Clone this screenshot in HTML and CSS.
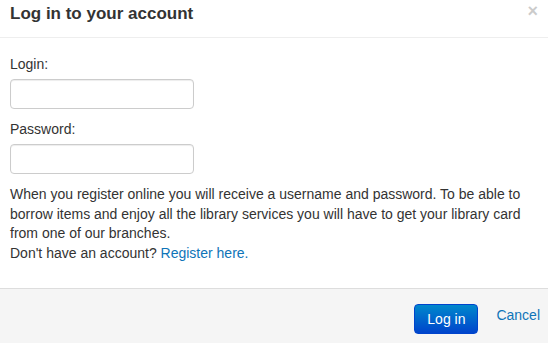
FILE: index.html
```html
<!DOCTYPE html>
<html>
<head>
<meta charset="utf-8">
<link rel="stylesheet" href="styles.css">
</head>
<body>
<div class="modal">
  <div class="modal-header">
    <h3 class="title">Log in to your account</h3>
    <span class="close">&times;</span>
  </div>
  <div class="modal-body">
    <label class="label">Login:</label>
    <input class="field" type="text">
    <label class="label">Password:</label>
    <input class="field" type="password">
    <p class="info">When you register online you will receive a username and password. To be able to borrow items and enjoy all the library services you will have to get your library card from one of our branches.<br>Don't have an account? <a class="link" href="#">Register here.</a></p>
  </div>
  <div class="modal-footer">
    <button class="btn-primary">Log in</button>
    <a class="cancel" href="#">Cancel</a>
  </div>
</div>
</body>
</html>
```
FILE: styles.css
```css
html, body {
  margin: 0;
  padding: 0;
  background: #fff;
}
body {
  font-family: "Liberation Sans", Arial, sans-serif;
  font-size: 14px;
  line-height: 20px;
  color: #333;
  width: 548px;
  height: 343px;
  overflow: hidden;
}
.modal {
  display: flex;
  flex-direction: column;
  height: 343px;
}
.modal-header {
  height: 37px;
  border-bottom: 1px solid #eee;
  display: flex;
  justify-content: space-between;
  align-items: flex-start;
  padding: 0 10px;
}
.title {
  margin: 0;
  font-size: 17px;
  font-weight: bold;
  line-height: 20px;
  padding-top: 4px;
  color: #333;
}
.close {
  font-size: 18px;
  font-weight: bold;
  line-height: 20px;
  color: #000;
  opacity: 0.2;
  margin-top: 1px;
}
.modal-body {
  flex: 1;
  padding: 16px 10px 0;
  display: flex;
  flex-direction: column;
  align-items: flex-start;
}
.label {
  display: block;
  margin-bottom: 5px;
}
.field {
  box-sizing: border-box;
  width: 184px;
  height: 30px;
  border: 1px solid #ccc;
  border-radius: 4px;
  padding: 4px 6px;
  margin: 0 0 10px;
  font: inherit;
  box-shadow: inset 0 1px 1px rgba(0,0,0,0.075);
}
.info {
  margin: 1px 0 0;
  line-height: 19.5px;
}
.link, .cancel {
  color: #0f74b8;
  text-decoration: none;
}
.modal-footer {
  height: 54px;
  border-top: 1px solid #ddd;
  background: #f5f5f5;
  display: flex;
  justify-content: flex-end;
  align-items: center;
  padding: 0 8px 0 0;
  gap: 18px;
}
.btn-primary {
  box-sizing: border-box;
  width: 64px;
  height: 30px;
  border: 1px solid #04c;
  border-radius: 4px;
  background: linear-gradient(#0088cc, #0044cc);
  color: #fff;
  font: inherit;
  font-size: 14px;
  padding: 0;
  margin-top: 6px;
}
.cancel {
  margin-bottom: 2px;
}
```
